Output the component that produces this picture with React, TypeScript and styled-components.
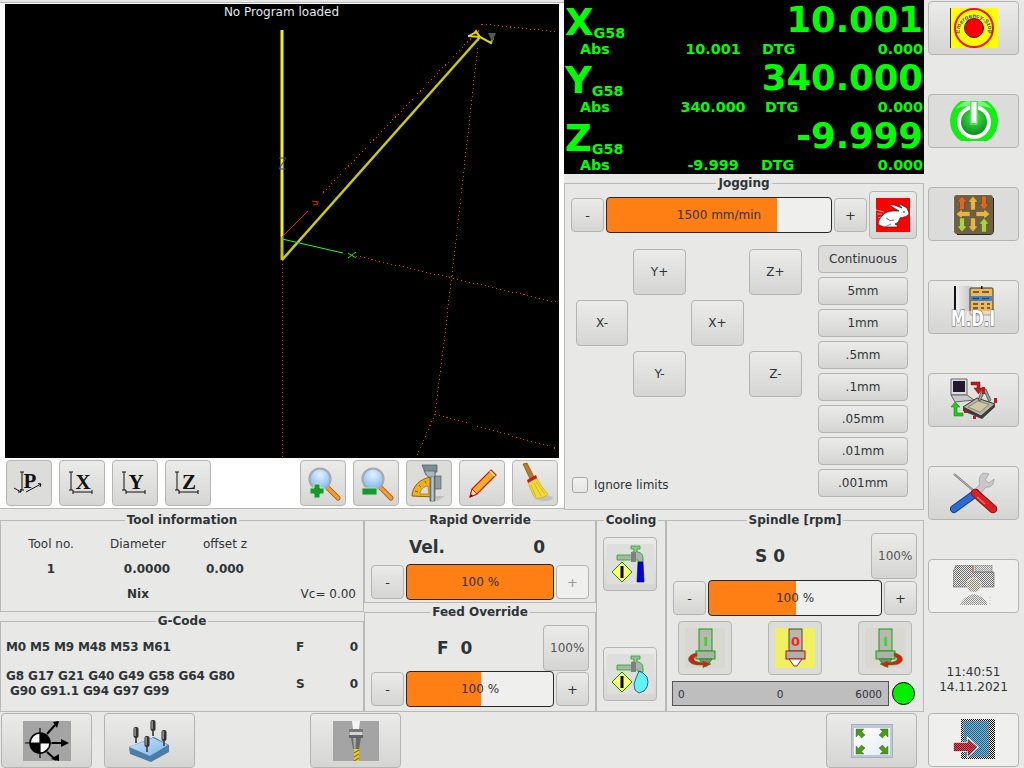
import React, { FC, ReactNode } from "react";
import styled, { createGlobalStyle, css } from "styled-components";

const Global = createGlobalStyle`
  html, body { margin: 0; padding: 0; background: #e8e8e7; }
  body { font-family: "DejaVu Sans", sans-serif; font-size: 12px; color: #2e3436; overflow: hidden; }
  * { box-sizing: border-box; }
  svg { display: block; }
`;

const Page = styled.div`
  width: 1024px;
  height: 768px;
  display: grid;
  grid-template-columns: 924px 100px;
  background: #e8e8e7;
  overflow: hidden;
`;

const Main = styled.div`
  display: grid;
  grid-template-rows: 510px 202px 56px;
`;

const TopRow = styled.div`
  display: grid;
  grid-template-columns: 564px 360px;
`;

const BottomRow = styled.div`
  display: grid;
  grid-template-columns: 364px 232px 70px 258px;
  padding-top: 1px;
`;

const Column = styled.div`
  display: flex;
  flex-direction: column;
  min-height: 0;
`;

const Btn = styled.button<{ $flat?: boolean; $off?: boolean }>`
  display: flex;
  align-items: center;
  justify-content: center;
  padding: 0;
  margin: 0;
  border: 1px solid #b4b4b2;
  border-radius: 4px;
  font: 12px "DejaVu Sans", sans-serif;
  color: #2e3436;
  background: linear-gradient(#ebebea, #d5d5d4);
  overflow: hidden;
  ${(p) => p.$flat && css`background: #dcdcdb;`}
  ${(p) => p.$off && css`background: #efefee; color: #9a9a9a;`}
`;

/* ---------- viewer ---------- */

const Viewer = styled.div`
  margin-top: 2px;
  height: 507px;
  background: #fff;
  border-top: 1px solid #b9b9b7;
  border-bottom: 1px solid #b9b9b7;
  padding: 1px 5px 0 5px;
  display: flex;
  flex-direction: column;
`;

const Canvas = styled.div`
  position: relative;
  height: 454px;
  background: #000;
`;

const CanvasLabel = styled.div`
  position: absolute;
  top: 1px;
  left: 0;
  right: 0;
  text-align: center;
  color: #e2e8f0;
  line-height: 15px;
  padding-right: 1px;
`;

const ViewBar = styled.div`
  display: flex;
  gap: 7px;
  padding: 2px 0 0 1px;
`;

const ViewButton = styled(Btn)`
  width: 46px;
  height: 46px;
  flex: none;
`;

const BarGap = styled.div`
  width: 75px;
  flex: none;
`;

/* ---------- position readout ---------- */

const Right = styled.div`
  display: flex;
  flex-direction: column;
`;

const Dro = styled.div`
  height: 174px;
  background: #000;
  color: #00ff00;
  font-weight: 700;
  padding-right: 1px;
  flex: none;
`;

const DroAxis = styled.div`
  height: 58px;
`;

const DroTop = styled.div`
  display: flex;
  justify-content: space-between;
  align-items: flex-start;
  height: 42px;
  line-height: 40px;
  padding-left: 1px;
`;

const DroName = styled.div`
  display: flex;
  align-items: baseline;
  font-size: 37px;
  padding-top: 3px;
`;

const DroValue = styled.span`
  font-size: 35.4px;
`;

const Work = styled.span`
  font-size: 14.3px;
  line-height: 15px;
  position: relative;
  top: 3px;
`;

const DroSub = styled.div`
  display: grid;
  grid-template-columns: 16px 100px 66px 60px 1fr;
  font-size: 14.3px;
  line-height: 16px;
  height: 16px;
  margin-top: -1px;
`;

const AbsLabel = styled.span`
  grid-column: 2;
`;

const AbsValue = styled.span`
  grid-column: 3;
  text-align: center;
  white-space: nowrap;
`;

const Dtg = styled.span<{ $shift: number }>`
  grid-column: 4;
  margin-left: ${(p) => 16 + p.$shift}px;
`;

const Togo = styled.span`
  grid-column: 5;
  text-align: right;
`;

/* ---------- group boxes ---------- */

const Group = styled.section<{ $h?: number }>`
  display: flex;
  flex-direction: column;
  min-height: 0;
  ${(p) => (p.$h ? css`height: ${p.$h}px; flex: none;` : css`flex: 1;`)}
`;

const GroupHead = styled.div`
  display: flex;
  align-items: center;
  gap: 2px;
  height: 18px;
  font-weight: 700;
  flex: none;
  &::before, &::after {
    content: "";
    flex: 1;
    height: 1px;
    background: #b9b9b7;
  }
`;

const GroupBody = styled.div`
  flex: 1;
  margin-top: -9px;
  padding-top: 9px;
  border: 1px solid #b9b9b7;
  border-top: 0;
  min-height: 0;
`;

const Box: FC<{ title: string; h?: number; children: ReactNode }> = ({ title, h, children }) => (
  <Group $h={h}>
    <GroupHead>{title}</GroupHead>
    <GroupBody>{children}</GroupBody>
  </Group>
);

/* ---------- sliders ---------- */

const SliderTrack = styled.div<{ $w: number; $fill: number }>`
  width: ${(p) => p.$w}px;
  height: 36px;
  border: 1px solid #26292a;
  border-radius: 4px;
  overflow: hidden;
  display: grid;
  background: linear-gradient(90deg, #ff7f14 ${(p) => p.$fill}px, #efefee ${(p) => p.$fill}px);
  align-items: center;
  text-align: center;
  flex: none;
`;

const SliderRow = styled.div<{ $top?: number }>`
  display: flex;
  align-items: center;
  gap: 2px;
  padding-left: 6px;
  margin-top: ${(p) => p.$top || 0}px;
`;

const SmallButton = styled(Btn)`
  width: 33px;
  height: 34px;
  font-size: 13px;
  flex: none;
`;

/* ---------- jogging ---------- */

const JogFeed = styled(SliderRow)`
  height: 48px;
  margin-top: -1px;
`;

const HareButton = styled(Btn)`
  width: 48px;
  height: 48px;
  flex: none;
`;

const JogBody = styled.div`
  display: grid;
  grid-template-columns: 242px 90px;
  padding-left: 11px;
  margin-top: 6px;
`;

const JogLeft = styled.div`
  display: flex;
  flex-direction: column;
  height: 252px;
`;

const JogPad = styled.div`
  display: grid;
  grid-template-columns: 52px repeat(3, 53px);
  grid-auto-rows: 46px;
  column-gap: 5px;
  row-gap: 5px;
  margin-top: 4px;
`;

const JogButton = styled(Btn)<{ $col: number; $row: number }>`
  grid-column: ${(p) => p.$col};
  grid-row: ${(p) => p.$row};
`;

const Steps = styled.div`
  display: flex;
  flex-direction: column;
  gap: 4px;
  width: 90px;
`;

const StepButton = styled(Btn)`
  height: 28px;
`;

const Limits = styled.label`
  margin-top: auto;
  margin-left: -4px;
  margin-bottom: 4px;
  display: flex;
  align-items: center;
  gap: 6px;
`;

const Check = styled.span`
  width: 16px;
  height: 16px;
  border: 1px solid #a8a8a6;
  border-radius: 3px;
  background: linear-gradient(#f2f2f1, #e6e6e5);
`;

/* ---------- tool / gcode ---------- */

const ToolGrid = styled.div`
  display: grid;
  grid-template-columns: 100px 74px 100px 1fr;
  grid-auto-rows: 25px;
  align-items: center;
  padding-top: 2px;
  text-align: center;
`;

const ToolBold = styled.span<{ $shift?: number }>`
  font-weight: 700;
  padding-left: ${(p) => p.$shift || 0}px;
`;

const ToolBlank = styled.span``;

const ToolVc = styled.span`
  text-align: right;
  padding-right: 7px;
`;

const GcodeGrid = styled.div`
  display: grid;
  grid-template-columns: 290px 30px 1fr;
  grid-template-rows: 27px 46px;
  align-items: center;
  padding: 4px 5px 0 5px;
  font-weight: 700;
  line-height: 15px;
  white-space: pre;
`;

const Modal = styled.span`
  letter-spacing: -0.15px;
`;

const Num = styled.span`
  text-align: right;
`;

const Topline = styled.div`
  display: flex;
  align-items: center;
  font-size: 17px;
  font-weight: 700;
`;

const VelLine = styled(Topline)`
  height: 35px;
  padding: 0 50px 0 44px;
  justify-content: space-between;
`;

const FeedLine = styled(Topline)`
  height: 45px;
  padding-left: 72px;
  justify-content: space-between;
  padding-right: 6px;
  margin-top: 4px;
  white-space: pre;
`;

const ResetButton = styled(Btn)`
  width: 46px;
  height: 46px;
  font-size: 12px;
  color: #555;
  justify-content: flex-start;
  padding-left: 6px;
  flex: none;
`;

/* ---------- cooling / spindle ---------- */

const CoolBody = styled.div`
  display: flex;
  flex-direction: column;
  gap: 56px;
  padding: 8px 0 0 6px;
`;

const IconButton = styled(Btn)`
  width: 54px;
  height: 54px;
  flex: none;
`;

const SpindleLine = styled(Topline)`
  height: 46px;
  margin-top: 4px;
  padding: 0 6px 0 88px;
  justify-content: space-between;
`;

const Rotation = styled.div`
  display: flex;
  justify-content: space-between;
  padding: 0 11px;
  margin-top: 5px;
`;

const SpeedRow = styled.div`
  display: flex;
  align-items: center;
  gap: 3px;
  margin: 6px 0 0 5px;
`;

const SpeedBar = styled.div`
  width: 217px;
  height: 25px;
  border: 1px solid #555;
  background: #bebebe;
  display: grid;
  grid-template-columns: 1fr 1fr 1fr;
  align-items: center;
  padding: 0 6px 0 5px;
  font-size: 10.5px;
`;

const SpeedMid = styled.span`
  text-align: center;
`;

const Lamp = styled.div`
  width: 23px;
  height: 23px;
  border-radius: 50%;
  background: #00f000;
  border: 1.5px solid #000;
`;

/* ---------- bars ---------- */

const BottomBar = styled.div`
  display: flex;
  padding: 1px 0 0 1px;
`;

const BarButton = styled(Btn)<{ $gap: number }>`
  width: 91px;
  height: 55px;
  margin-right: ${(p) => p.$gap}px;
  flex: none;
`;

const Side = styled.div`
  display: flex;
  flex-direction: column;
  align-items: flex-start;
  padding: 1px 0 0 4px;
  gap: 39px;
`;

const SideButton = styled(Btn)`
  width: 91px;
  height: 54px;
  flex: none;
`;

const Clock = styled.div`
  width: 91px;
  height: 48px;
  margin-bottom: -39px;
  margin-top: 13px;
  text-align: center;
  line-height: 15px;
  flex: none;
`;

/* ---------- drawings ---------- */

const EStopIcon = () => (
  <svg width="48" height="40" viewBox="0 0 48 40">
    <rect width="48" height="40" fill="#ffff00" />
    <rect width="1" height="40" fill="#333" />
    <circle cx="24" cy="20" r="19" fill="none" stroke="#f01010" strokeWidth="2" />
    <circle cx="24" cy="20" r="9.5" fill="#ff0000" stroke="#222" />
    <path id="estoparc" d="M10 28 A14.500 14.500 0 1 1 38 28" fill="none" />
    <text fontSize="6" fontWeight="700" fill="#3a4aa0" fontFamily="Liberation Sans, sans-serif" textAnchor="middle">
      <textPath href="#estoparc" startOffset="50%">Emergency-Stop</textPath>
    </text>
  </svg>
);

const PowerIcon = () => (
  <svg width="48" height="40" viewBox="0 0 48 40">
    <defs>
      <clipPath id="pw"><rect width="48" height="40" /></clipPath>
      <radialGradient id="pwin" cx="0.5" cy="0.35" r="0.7">
        <stop offset="0" stopColor="#40f040" />
        <stop offset="1" stopColor="#067a20" />
      </radialGradient>
    </defs>
    <g clipPath="url(#pw)">
      <circle cx="24" cy="20" r="24" fill="#10f010" />
      <path d="M6 8 C14 -4 34 -4 42 8 C32 3 16 3 6 8Z" fill="#7cf57c" />
      <circle cx="24" cy="21" r="14" fill="url(#pwin)" />
      <circle cx="24" cy="21" r="15" fill="none" stroke="#fff" strokeWidth="4" />
      <rect x="20" y="0" width="8" height="24" fill="#50e050" />
      <rect x="21.500" y="1" width="5" height="21" fill="#fff" />
    </g>
  </svg>
);

const ArrowMark: FC<{ x: number; y: number; r: number; c: string }> = ({ x, y, r, c }) => (
  <path
    transform={`translate(${x} ${y}) rotate(${r})`}
    d="M0 -7 L5 -1 H2.500 V7 H-2.500 V-1 H-5Z"
    fill={c}
    stroke="#40381f"
    strokeWidth=".4"
  />
);

const JogIcon = () => (
  <svg width="41" height="41" viewBox="0 0 41 41">
    <rect x=".5" y=".5" width="40" height="40" rx="3" fill="#6d6248" stroke="#eee9da" />
    <path d="M40.500 4 V37 Q40.500 40.500 37 40.500 H4" fill="none" stroke="#2a2516" />
    <ArrowMark x={9} y={9} r={0} c="#e4641c" />
    <ArrowMark x={20} y={9} r={0} c="#e8b444" />
    <ArrowMark x={31} y={9} r={180} c="#e4641c" />
    <ArrowMark x={10} y={20} r={-90} c="#e8b444" />
    <ArrowMark x={30} y={20} r={90} c="#e8b444" />
    <ArrowMark x={9} y={31} r={180} c="#a6d63a" />
    <ArrowMark x={20} y={31} r={180} c="#e8b444" />
    <ArrowMark x={31} y={31} r={0} c="#a6d63a" />
  </svg>
);

const MdiIcon = () => (
  <svg width="48" height="42" viewBox="-3 0 48 42">
    <defs>
      <linearGradient id="mdibg" x1="0" x2="1">
        <stop offset="0" stopColor="#f4f4f4" />
        <stop offset="1" stopColor="#c4c4c4" />
      </linearGradient>
    </defs>
    <rect x="1" y="0" width="18" height="26" fill="url(#mdibg)" />
    <rect x="1" y="0" width="2" height="26" fill="#111" />
    <rect x="17" y="2" width="23" height="27" rx="1" fill="#f0b858" stroke="#333" />
    <rect x="18" y="10" width="21" height="5" fill="#3888d8" />
    <path d="M20 6h6M29 6h7M20 12.500h6M29 12.500h7M20 18h5M28 18h3M34 18h3M20 22h5M28 22h3M34 22h3" stroke="#444" strokeWidth="1.300" />
    <rect x="28" y="0" width="1.500" height="3" fill="#111" />
    <rect x="0" y="25" width="41" height="15" fill="#eee" opacity=".6" />
    <text
      x="20"
      y="40"
      textAnchor="middle"
      fontSize="21"
      fontWeight="700"
      fill="#fff"
      stroke="#666"
      strokeWidth="1.200"
      paintOrder="stroke"
      textLength="44"
      lengthAdjust="spacingAndGlyphs"
      fontFamily="DejaVu Sans, sans-serif"
    >
      M.D.I
    </text>
  </svg>
);

const CncIcon = () => (
  <svg width="50" height="44" viewBox="0 0 50 44">
    <path d="M2 1 H18 V17 H2Z" fill="#dcdcdc" stroke="#666" />
    <rect x="4" y="3" width="12" height="11" fill="#20182c" />
    <path d="M2 17 H18 L25 22 L6 24 Z" fill="#c8c8c8" stroke="#666" />
    <path d="M22 4 H31 V10 H34 L29.500 16 L25 10 H28 V7 H22Z" fill="#c01818" stroke="#701010" strokeWidth=".5" />
    <path d="M2 29 L6 24 L11 29 H8 V35 H14 V38 H5 V29Z" fill="#18d018" stroke="#0a7a0a" strokeWidth=".5" />
    <path d="M14 29 L28 20 L46 26 L32 38 Z" fill="#b8b4a4" stroke="#333" />
    <path d="M19 29 L29 23 L40 26.500 L31 34Z" fill="#d0c8a4" stroke="#6a6448" strokeWidth=".6" />
    <path d="M32 38 L46 26 V29 L33 41 L14 33 V29Z" fill="#3c3c3c" />
    <path d="M29 22 L33 11 H37 L42 22 L40 24 L36 15 H35 L31 23Z" fill="#9a9a9a" stroke="#333" strokeWidth=".6" />
    <rect x="33" y="9" width="3" height="7" fill="#c01818" />
    <rect x="45" y="20" width="3" height="5" fill="#c01818" />
    <rect x="15" y="32" width="3" height="3" fill="#c01818" />
    <rect x="24" y="38" width="3" height="3" fill="#c01818" />
  </svg>
);

const ToolsIcon = () => (
  <svg width="48" height="42" viewBox="0 0 48 42">
    <path d="M4 2 L24 19" stroke="#6e6e6e" strokeWidth="2.200" />
    <path d="M4 2 L24 19" stroke="#d8d8d8" strokeWidth=".8" />
    <path d="M33 1 C28 5 29 10 30 12 L22 21 L27 26 L36 15 C40 16 44 13 44 7 L39 11 L35 8 L39 2Z" fill="#c8c8cc" stroke="#8e8e92" strokeWidth=".6" />
    <path d="M26 21 L4 37" stroke="#14408c" strokeWidth="8" strokeLinecap="round" />
    <path d="M26 21 L4 37" stroke="#2a6cd4" strokeWidth="6" strokeLinecap="round" />
    <path d="M25 21 L43 37" stroke="#8e1010" strokeWidth="8.500" strokeLinecap="round" />
    <path d="M25 21 L43 37" stroke="#dc2020" strokeWidth="6.500" strokeLinecap="round" />
    <path d="M27 25 L35 32" stroke="#f07070" strokeWidth="1.500" />
  </svg>
);

const Dither: FC<{ id: string; c: string }> = ({ id, c }) => (
  <pattern id={id} width="2" height="2" patternUnits="userSpaceOnUse">
    <rect width="1" height="1" fill={c} />
    <rect x="1" y="1" width="1" height="1" fill={c} />
  </pattern>
);

const PersonIcon = () => (
  <svg width="42" height="42" viewBox="0 0 42 42">
    <defs>
      <Dither id="dg" c="#6a6a6a" />
      <Dither id="dl" c="#8e8e8e" />
      <Dither id="dh" c="#8c8270" />
    </defs>
    <path d="M3 0 H20 V7 H41 V22 H0 V7Z" fill="url(#dg)" stroke="#777" strokeWidth=".7" />
    <rect x="22" y="0" width="17" height="7" fill="url(#dl)" stroke="#777" strokeWidth=".6" />
    <rect x="19" y="0" width="2" height="7" fill="#d06030" opacity=".5" />
    <circle cx="21" cy="20" r="7.500" fill="#efefee" />
    <circle cx="21" cy="20" r="7" fill="url(#dh)" />
    <path d="M7 40 Q9 32 21 29 Q33 32 35 40Z" fill="url(#dl)" />
    <path d="M37 32 v8" stroke="#bbb" strokeDasharray="1 2" />
  </svg>
);

const ExitIcon = () => (
  <svg width="42" height="42" viewBox="0 0 42 42">
    <defs>
      <Dither id="db" c="#1c5f88" />
      <Dither id="dr" c="#8c0818" />
      <Dither id="dk" c="#000" />
    </defs>
    <path d="M8 0 H42 V40 H8Z" fill="url(#dk)" />
    <path d="M10 2 H36 V38 H12Z" fill="#84b8d0" />
    <path d="M10 2 H36 V38 H12Z" fill="url(#db)" />
    <path d="M0 23 H14 V17 L26 28 L14 39 V33 H0Z" fill="#fff" />
    <path d="M1 24 H15 V20 L24 28 L15 37 V32 H1Z" fill="#d85868" stroke="#666" strokeWidth=".6" />
    <path d="M1 24 H15 V20 L24 28 L15 37 V32 H1Z" fill="url(#dr)" />
  </svg>
);

const ViewGlyph: FC<{ l: string }> = ({ l }) => (
  <svg width="36" height="40" viewBox="0 0 36 40">
    {l === "P" ? (
      <>
        <path d="M11 9 V27 M9 9 H13 M9 27 H13" stroke="#111" fill="none" />
        <path d="M3 25 L10 29 M7 29 H10 V26 M15 29 L30 21 M27 20.500 L30 21 L29 24" stroke="#111" fill="none" />
        <text x="19" y="25" textAnchor="middle" fontSize="21" fontWeight="700" fontFamily="Liberation Serif, serif" fill="#111">P</text>
      </>
    ) : (
      <>
        <path d="M7 9 V27 M5 9 H9 M5 27 H9 M9 29 H28 M9 27 V31 M28 27 V31" stroke="#111" fill="none" />
        <text x="19" y="26" textAnchor="middle" fontSize="21" fontWeight="700" fontFamily="Liberation Serif, serif" fill="#111">{l}</text>
      </>
    )}
  </svg>
);

const Lens: FC<{ id: string }> = ({ id }) => (
  <>
    <defs>
      <radialGradient id={id} cx=".5" cy=".3" r=".7">
        <stop offset="0" stopColor="#e4f2ff" />
        <stop offset="1" stopColor="#7db6f4" />
      </radialGradient>
    </defs>
    <path d="M25 25 L35 35" stroke="#a85a10" strokeWidth="5" strokeLinecap="round" />
    <path d="M25 25 L35 35" stroke="#f59a30" strokeWidth="3.200" strokeLinecap="round" />
    <circle cx="17" cy="16" r="10.500" fill={`url(#${id})`} stroke="#a8a8b0" strokeWidth="2.200" />
  </>
);

const ZoomInIcon = () => (
  <svg width="40" height="40" viewBox="0 0 40 40">
    <Lens id="zi" />
    <path d="M11 21 H17 V25 H21 V31 H17 V35 H11 V31 H7 V25 H11Z" fill="#149a2a" stroke="#c4e8c4" />
  </svg>
);

const ZoomOutIcon = () => (
  <svg width="40" height="40" viewBox="0 0 40 40">
    <Lens id="zo" />
    <rect x="6" y="25" width="15" height="7" rx="1" fill="#149a2a" stroke="#b8e0b8" />
  </svg>
);

const MeasureIcon = () => (
  <svg width="40" height="40" viewBox="0 0 40 40">
    <path d="M3 33 C3 24 11 15 23 14 L25 34Z" fill="#eeb01c" stroke="#8a6208" />
    <path d="M11 31 C11 27 15 23 19 23 L20 31Z" fill="#dcdcdc" stroke="#8a6208" strokeWidth=".6" />
    <path d="M6 28 L9 29 M10 22 L12 24 M16 18 L17 20" stroke="#7a5a08" />
    <path d="M13 2 H28 V9 H26 V38 H21 V12 H17Z" fill="#7c8c94" stroke="#4a5458" strokeWidth=".7" />
    <path d="M15 8 H26 V14 H19Z" fill="#a8b8bc" stroke="#4a5458" strokeWidth=".6" />
    <rect x="26" y="13" width="6" height="13" fill="#8c9ca2" stroke="#4a5458" strokeWidth=".6" />
    <rect x="22.500" y="14" width="2" height="24" fill="#b8c8cc" />
    <path d="M26 33 H36 L28 38Z" fill="#888" opacity=".35" />
  </svg>
);

const PencilIcon = () => (
  <svg width="40" height="40" viewBox="0 0 40 40">
    <path d="M29 7 L34 12 L15 31 L8 34 L10 26Z" fill="#f4ac20" stroke="#c01c10" strokeWidth="1.200" />
    <path d="M8 34 L10 26 L15 31Z" fill="#f8dcb0" stroke="#c01c10" />
    <path d="M8 34 L9 31 L11 33Z" fill="#600" />
    <path d="M28 8 L33 13" stroke="#fff4b0" strokeWidth="1.500" />
  </svg>
);

const BroomIcon = () => (
  <svg width="40" height="42" viewBox="0 0 40 42">
    <ellipse cx="29" cy="36" rx="9" ry="3" fill="#aaa" opacity=".5" />
    <path d="M8 2 L12 1 L19 15 L15 17Z" fill="#b87c28" stroke="#7a5010" strokeWidth=".7" />
    <path d="M13 19 L21 15 C25 22 29 28 33 32 C29 36 22 37 20 36 C17 31 14 25 13 19Z" fill="#f2da3a" stroke="#c8a818" strokeWidth=".7" />
    <path d="M12 18 L21 13 L22 16 L13 21Z" fill="#c81818" />
    <path d="M16 23 L21 35 M19 21 L26 34 M21 20 L30 32" stroke="#c8a818" strokeWidth=".7" />
  </svg>
);

const HareIcon = () => (
  <svg width="34" height="34" viewBox="0 0 34 34">
    <rect width="34" height="34" fill="#ff0000" />
    <path d="M0 12 L8 14 M1 16 L6 16 M2 20 L5 19" stroke="#ffb0a0" strokeWidth="1" />
    <path d="M23 13 L13 7 L18 7 L26 10 L22 5 L31 10 L33 15 Q33 18 28 19 L24 20 Q23 25 19 26 L22 28 L21 29 H8 L3 27 Q1 24 5 19 Q9 13 17 13Z" fill="#fff" stroke="#222" strokeWidth=".7" />
    <path d="M10 20 Q14 24 18 22 M9 29 L15 26" stroke="#555" strokeWidth=".8" fill="none" />
    <circle cx="28" cy="14" r=".8" fill="#222" />
  </svg>
);

const Tap: FC<{ water: "stream" | "splash" }> = ({ water }) => (
  <svg width="48" height="40" viewBox="0 0 48 40">
    <rect x="1" y="0" width="47" height="40" fill="#dededc" />
    <path d="M11 11 H26 V8 H28 V5 H25 V2 H34 V5 H31 V8 H32 Q37 9 37 14 V18 H32 V16 H11Z" fill="#b0b0b0" stroke="#00c000" strokeWidth=".8" />
    <rect x="25" y="8" width="5" height="10" fill="#808080" />
    <path d="M6 28 L16 18 L26 28 L16 38Z" fill="#ffff70" stroke="#00a000" />
    <rect x="14.500" y="22" width="3" height="12" fill="#000" />
    {water === "stream" ? (
      <path d="M32 18 L37 18 L38 38 H31Z" fill="#0000e0" stroke="#003" strokeWidth=".6" />
    ) : (
      <path d="M33 17 L37 19 L41 23 L42 28 L41 33 L38 37 L33 39 L29 36 L28 30 L30 24 Z" fill="#60f4f8" stroke="#004" strokeWidth=".6" />
    )}
  </svg>
);

const Spindle: FC<{ dir: "left" | "stop" | "right" }> = ({ dir }) => {
  const stop = dir === "stop";
  const edge = stop ? "#b01010" : "#10a010";
  return (
    <svg width="40" height="40" viewBox="0 0 40 40">
      <rect width="40" height="40" fill={stop ? "#f0f060" : "#d8d8d0"} />
      <rect x="14" y="1" width="13" height="22" fill="#b8b8b0" stroke={stop ? "#444" : edge} />
      <text x="20.500" y="18" textAnchor="middle" fontSize="13" fontWeight="700" fill={stop ? "#ff2020" : "#20e020"} fontFamily="DejaVu Sans, sans-serif">
        {stop ? "0" : "I"}
      </text>
      <rect x="11" y="23" width="19" height="8" fill="#b0b0a8" stroke={edge} />
      <path d="M14 31 H27 L22 38 H19Z" fill={stop ? "#fff" : "#888"} stroke={edge} />
      {dir === "left" && <path d="M12 25 C0 27 1 37 14 37 L18 37 L18 39.500 L26 36 L18 33 L18 34.500 C7 34 7 30 12 28Z" fill="#e01818" stroke="#10a010" strokeWidth=".6" />}
      {dir === "right" && <path d="M29 25 C41 27 40 37 27 37 L23 37 L23 39.500 L15 36 L23 33 L23 34.500 C34 34 34 30 29 28Z" fill="#e01818" stroke="#10a010" strokeWidth=".6" />}
    </svg>
  );
};

const TouchIcon = () => (
  <svg width="48" height="40" viewBox="0 0 48 40">
    <rect width="48" height="40" fill="#a4a4a4" />
    <circle cx="17" cy="22" r="10" fill="#fff" stroke="#000" strokeWidth="1.600" />
    <path d="M17 22 V12 A10 10 0 0 1 27 22Z M17 22 V32 A10 10 0 0 1 7 22Z" fill="#000" />
    <path d="M2 22 H32 M17 7 V37" stroke="#000" strokeWidth="1.200" />
    <g stroke="#000" strokeWidth="2" fill="#000">
      <path d="M24 13 L32 4" />
      <path d="M29 22 H40" />
      <path d="M24 31 L33 39" />
    </g>
    <path d="M30 1 L36 0 L34 7Z M38 18 L46 22 L38 26Z M28 38 L36 33 L36 40Z" fill="#000" />
  </svg>
);

const Probe: FC<{ x: number; y: number }> = ({ x, y }) => (
  <g transform={`translate(${x} ${y})`}>
    <rect x="-2.500" y="0" width="5" height="11" rx="2" fill="#333" />
    <rect x="-1" y="11" width="2" height="5" fill="#555" />
    <rect x="-1.500" y="1" width="1.200" height="8" fill="#aaa" />
  </g>
);

const ProbeIcon = () => (
  <svg width="42" height="42" viewBox="0 0 42 42">
    <defs>
      <linearGradient id="blk" x1="0" y1="0" x2="1" y2="1">
        <stop offset="0" stopColor="#cfe6fa" />
        <stop offset="1" stopColor="#78b4ec" />
      </linearGradient>
    </defs>
    <path d="M0 27 L25 17 L40 25 V32 L22 42 L1 34Z" fill="#4c7ca8" />
    <path d="M0 27 L24 18 L39 25 L21 36Z" fill="url(#blk)" />
    <Probe x={7} y={7} />
    <Probe x={24} y={0} />
    <Probe x={35} y={10} />
    <Probe x={18} y={16} />
  </svg>
);

const DrillIcon = () => (
  <svg width="46" height="40" viewBox="0 0 46 40">
    <rect width="46" height="40" fill="#a4a4a4" />
    <path d="M19 0 H27 L26 8 H20Z" fill="#f4f4f4" />
    <rect x="16" y="8" width="14" height="3" fill="#777" />
    <rect x="17" y="11" width="12" height="3" fill="#d4d4d4" />
    <rect x="16" y="14" width="14" height="3" fill="#666" />
    <path d="M18 17 H28 L26 28 H20Z" fill="#6a6a6a" />
    <path d="M20 17 H23 L22.500 28 H21Z" fill="#aaa" />
    <rect x="21" y="28" width="5" height="12" fill="#e8d020" />
    <path d="M21 32 L26 29 M21 36 L26 33 M21 40 L26 37" stroke="#887000" strokeWidth="1.200" />
  </svg>
);

const FullIcon = () => (
  <svg width="42" height="34" viewBox="0 0 42 34">
    <defs>
      <linearGradient id="fs" x1="0" x2="1" y1="0" y2="1">
        <stop offset="0" stopColor="#ffffff" />
        <stop offset="1" stopColor="#e4ecf4" />
      </linearGradient>
    </defs>
    <rect x=".5" y=".5" width="41" height="33" fill="#c0c8d6" stroke="#a8b0c0" />
    <rect x="3" y="4" width="36" height="27" fill="url(#fs)" />
    <g fill="#4c9a1c" stroke="#2c6a10" strokeWidth=".4">
      <path d="M5 5 H13 L10.500 7.500 L14 11 L10.500 14 L7.500 10.500 L5 13Z" />
      <path d="M37 5 H29 L31.500 7.500 L28 11 L31.500 14 L34.500 10.500 L37 13Z" />
      <path d="M5 30 H13 L10.500 27.500 L14 24 L10.500 21 L7.500 24.500 L5 22Z" />
      <path d="M37 30 H29 L31.500 27.500 L28 24 L31.500 21 L34.500 24.500 L37 22Z" />
    </g>
  </svg>
);

/* ---------- 3d backplot ---------- */

const Backplot = () => (
  <svg width="554" height="454" viewBox="5 4 554 454">
    <path
      d="M282 260 V458 M352 255 L560 303 M452 276 L479 36 M452 276 L435 414 M435 414 L558 449 M435 414 L416 458 M482 24 L558 32 M482 24 L478 32 M479 30 L316 200"
      stroke="#ff1c1c"
      strokeDasharray="1 3"
      fill="none"
      shapeRendering="crispEdges"
    />
    <path d="M282 30 V237" stroke="#f4f400" strokeWidth="3" />
    <path d="M282 237 V260" stroke="#c4c400" strokeWidth="3" />
    <path d="M282 260 L480 37" stroke="#cccc00" strokeWidth="2.500" />
    <path d="M469 36 L476 32 L480 37 L491 43 L493 38 M468 36 L480 37 M474 34 L476 31 L480 37" stroke="#d8d800" strokeWidth="2" fill="none" />
    <path d="M488 33 L496 33 L492 42Z" fill="#555" />
    <path d="M282 237 L308 211" stroke="#f02020" />
    <path d="M282 239 L343 253" stroke="#20f020" strokeWidth="1.200" />
    <path d="M348 253 L356 258 M356 252 L348 258" stroke="#20e020" />
    <path d="M312 201 L319 202 M313 205 L318 204 L316 201" stroke="#e02020" fill="none" />
    <path d="M279 158 H286 L279 169 H286" stroke="#3030f0" fill="none" />
  </svg>
);

const axes = [
  { n: "X", work: "10.001", abs: "10.001", shift: 0 },
  { n: "Y", work: "340.000", abs: "340.000", shift: 3 },
  { n: "Z", work: "-9.999", abs: "-9.999", shift: -1 },
];

const steps = ["5mm", "1mm", ".5mm", ".1mm", ".05mm", ".01mm", ".001mm"];

const App: FC = () => (
  <Page>
    <Global />
    <Main>
      <TopRow>
        <Viewer>
          <Canvas>
            <Backplot />
            <CanvasLabel>No Program loaded</CanvasLabel>
          </Canvas>
          <ViewBar>
            <ViewButton $flat><ViewGlyph l="P" /></ViewButton>
            <ViewButton><ViewGlyph l="X" /></ViewButton>
            <ViewButton><ViewGlyph l="Y" /></ViewButton>
            <ViewButton><ViewGlyph l="Z" /></ViewButton>
            <BarGap />
            <ViewButton><ZoomInIcon /></ViewButton>
            <ViewButton><ZoomOutIcon /></ViewButton>
            <ViewButton $flat><MeasureIcon /></ViewButton>
            <ViewButton><PencilIcon /></ViewButton>
            <ViewButton><BroomIcon /></ViewButton>
          </ViewBar>
        </Viewer>
        <Right>
          <Dro>
            {axes.map((a) => (
              <DroAxis key={a.n}>
                <DroTop>
                  <DroName>{a.n}<Work>G58</Work></DroName>
                  <DroValue>{a.work}</DroValue>
                </DroTop>
                <DroSub>
                  <AbsLabel>Abs</AbsLabel>
                  <AbsValue>{a.abs}</AbsValue>
                  <Dtg $shift={a.shift}>DTG</Dtg>
                  <Togo>0.000</Togo>
                </DroSub>
              </DroAxis>
            ))}
          </Dro>
          <Box title="Jogging">
            <JogFeed>
              <SmallButton>-</SmallButton>
              <SliderTrack $w={226} $fill={170}>1500 mm/min</SliderTrack>
              <SmallButton>+</SmallButton>
              <HareButton><HareIcon /></HareButton>
            </JogFeed>
            <JogBody>
              <JogLeft>
                <JogPad>
                  <JogButton $col={2} $row={1}>Y+</JogButton>
                  <JogButton $col={4} $row={1}>Z+</JogButton>
                  <JogButton $col={1} $row={2}>X-</JogButton>
                  <JogButton $col={3} $row={2}>X+</JogButton>
                  <JogButton $col={2} $row={3}>Y-</JogButton>
                  <JogButton $col={4} $row={3}>Z-</JogButton>
                </JogPad>
                <Limits><Check />Ignore limits</Limits>
              </JogLeft>
              <Steps>
                <StepButton $flat>Continuous</StepButton>
                {steps.map((s) => <StepButton key={s}>{s}</StepButton>)}
              </Steps>
            </JogBody>
          </Box>
        </Right>
      </TopRow>
      <BottomRow>
        <Column>
          <Box title="Tool information" h={101}>
            <ToolGrid>
              <span>Tool no.</span><span>Diameter</span><span>offset z</span><ToolBlank />
              <ToolBold>1</ToolBold><ToolBold $shift={18}>0.0000</ToolBold><ToolBold>0.000</ToolBold><ToolBlank />
              <ToolBlank /><ToolBold>Nix</ToolBold><ToolBlank /><ToolVc>Vc= 0.00</ToolVc>
            </ToolGrid>
          </Box>
          <Box title="G-Code">
            <GcodeGrid>
              <Modal>M0 M5 M9 M48 M53 M61</Modal><span>F</span><Num>0</Num>
              <Modal>{"G8 G17 G21 G40 G49 G58 G64 G80\n G90 G91.1 G94 G97 G99"}</Modal><span>S</span><Num>0</Num>
            </GcodeGrid>
          </Box>
        </Column>
        <Column>
          <Box title="Rapid Override" h={92}>
            <VelLine><span>Vel.</span><span>0</span></VelLine>
            <SliderRow>
              <SmallButton>-</SmallButton>
              <SliderTrack $w={148} $fill={148}>100 %</SliderTrack>
              <SmallButton $off>+</SmallButton>
            </SliderRow>
          </Box>
          <Box title="Feed Override">
            <FeedLine><span>F  0</span><ResetButton>100%</ResetButton></FeedLine>
            <SliderRow $top={1}>
              <SmallButton>-</SmallButton>
              <SliderTrack $w={148} $fill={74}>100 %</SliderTrack>
              <SmallButton>+</SmallButton>
            </SliderRow>
          </Box>
        </Column>
        <Box title="Cooling">
          <CoolBody>
            <IconButton><Tap water="stream" /></IconButton>
            <IconButton><Tap water="splash" /></IconButton>
          </CoolBody>
        </Box>
        <Box title="Spindle [rpm]">
          <SpindleLine><span>S 0</span><ResetButton>100%</ResetButton></SpindleLine>
          <SliderRow $top={1}>
            <SmallButton>-</SmallButton>
            <SliderTrack $w={174} $fill={87}>100 %</SliderTrack>
            <SmallButton>+</SmallButton>
          </SliderRow>
          <Rotation>
            <IconButton $flat><Spindle dir="left" /></IconButton>
            <IconButton $flat><Spindle dir="stop" /></IconButton>
            <IconButton $flat><Spindle dir="right" /></IconButton>
          </Rotation>
          <SpeedRow>
            <SpeedBar><span>0</span><SpeedMid>0</SpeedMid><Num>6000</Num></SpeedBar>
            <Lamp />
          </SpeedRow>
        </Box>
      </BottomRow>
      <BottomBar>
        <BarButton $gap={12}><TouchIcon /></BarButton>
        <BarButton $gap={115}><ProbeIcon /></BarButton>
        <BarButton $gap={425}><DrillIcon /></BarButton>
        <BarButton $gap={0}><FullIcon /></BarButton>
      </BottomBar>
    </Main>
    <Side>
      <SideButton><EStopIcon /></SideButton>
      <SideButton $flat><PowerIcon /></SideButton>
      <SideButton $flat><JogIcon /></SideButton>
      <SideButton><MdiIcon /></SideButton>
      <SideButton><CncIcon /></SideButton>
      <SideButton><ToolsIcon /></SideButton>
      <SideButton $off><PersonIcon /></SideButton>
      <Clock>11:40:51<br />14.11.2021</Clock>
      <SideButton $off><ExitIcon /></SideButton>
    </Side>
  </Page>
);

export default App;
